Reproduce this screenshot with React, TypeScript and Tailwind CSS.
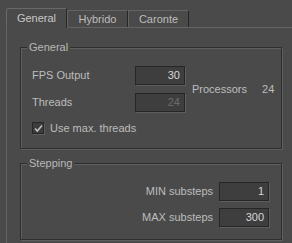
const labelCls = 'text-[#bdbdbd]';

function Field({ value, disabled }: { value: string; disabled?: boolean }) {
  return (
    <div
      className={`h-[19px] w-[50px] flex items-center justify-end pr-[4px] bg-[#3e3e3e] border border-[#262626] shadow-[1px_1px_0_#5e5e5e] ${
        disabled ? 'text-[#6c6c6c]' : 'text-[#d6d8da]'
      }`}
    >
      {value}
    </div>
  );
}

function Group({
  title,
  className,
  children,
}: {
  title: string;
  className: string;
  children: React.ReactNode;
}) {
  return (
    <div
      className={`relative w-[262px] border border-[#2e2e2e] shadow-[1px_1px_0_#5f5f5f,inset_1px_1px_0_#5f5f5f] ${className}`}
    >
      <span className="absolute -top-[8px] left-[6px] px-[2px] bg-[#4a4a4a] text-[#b8b8b8] leading-[14px]">
        {title}
      </span>
      {children}
    </div>
  );
}

export default function App() {
  return (
    <div className="w-[292px] h-[243px] overflow-hidden bg-[#4a4a4a] pt-[8px] pl-[6px] text-[11px] leading-none text-[#bdbdbd] font-['Liberation_Sans',Arial,sans-serif]">
      {/* tabs */}
      <div className="relative z-10 flex items-end h-[20px] -mb-px">
        <div className="h-[20px] w-[61px] flex items-center justify-center rounded-tl-[3px] bg-[#4a4a4a] border-l border-t border-r border-[#686868] border-r-[#262626] text-[#c8c8c8]">
          General
        </div>
        <div className="h-[17px] w-[61px] mb-px flex items-center justify-center border-t border-l border-r border-[#636363] border-r-[#262626]">
          Hybrido
        </div>
        <div className="h-[17px] w-[61px] mb-px flex items-center justify-center border-t border-l border-r border-[#636363] border-r-[#262626]">
          Caronte
        </div>
      </div>

      {/* panel */}
      <div className="w-[300px] h-[300px] border-t border-l border-[#636363] pl-[13px] pt-[19px]">
        <Group title="General" className="h-[102px] pt-[18px] pl-[11px]">
          <div className="flex items-center">
            <div className="grid grid-cols-[103px_50px] gap-y-[8px] items-center">
              <span className={labelCls}>FPS Output</span>
              <Field value="30" />
              <span className={labelCls}>Threads</span>
              <Field value="24" disabled />
            </div>
            <span className="ml-[7px]">Processors</span>
            <span className="ml-[15px]">24</span>
          </div>
          <div className="mt-[10px] flex items-center gap-[6px]">
            <div className="w-[12px] h-[12px] bg-[#3c3c3c] border border-[#272727] shadow-[1px_1px_0_#5e5e5e] flex items-center justify-center">
              <svg width="9" height="9" viewBox="0 0 9 9">
                <path d="M1 4.5 L3.3 7 L8 1.5" fill="none" stroke="#c0c0c0" strokeWidth="1.6" />
              </svg>
            </div>
            <span>Use max. threads</span>
          </div>
        </Group>

        <Group title="Stepping" className="mt-[14px] h-[77px] pt-[18px] pr-[12px]">
          <div className="flex flex-col gap-[7px]">
            <div className="flex items-center justify-end gap-[6px]">
              <span>MIN substeps</span>
              <Field value="1" />
            </div>
            <div className="flex items-center justify-end gap-[6px]">
              <span>MAX substeps</span>
              <Field value="300" />
            </div>
          </div>
        </Group>
      </div>
    </div>
  );
}
